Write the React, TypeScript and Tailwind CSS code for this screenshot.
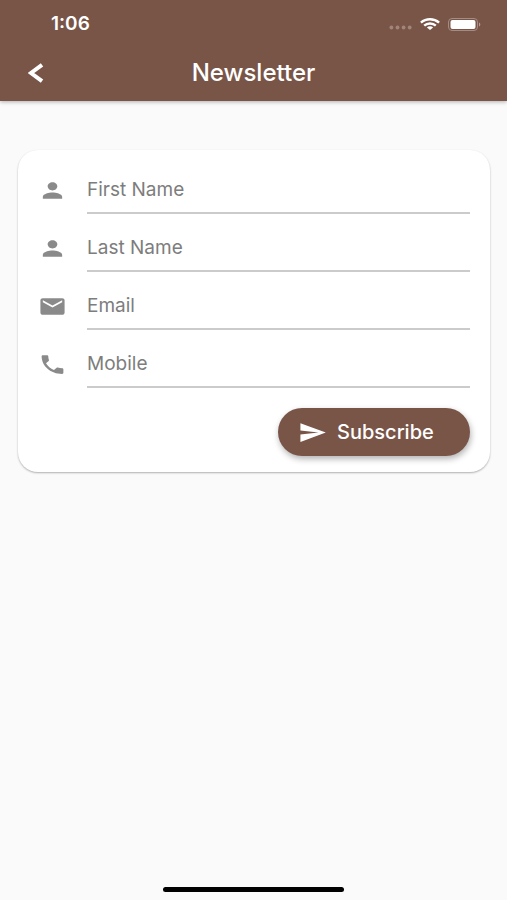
import React, { useState } from 'react';

const PERSON = 'M12 12c2.21 0 4-1.79 4-4s-1.79-4-4-4-4 1.79-4 4 1.79 4 4 4zm0 2c-2.67 0-8 1.34-8 4v2h16v-2c0-2.66-5.33-4-8-4z';
const MAIL = 'M20 4H4c-1.1 0-2 .9-2 2v12c0 1.1.9 2 2 2h16c1.1 0 2-.9 2-2V6c0-1.1-.9-2-2-2zm0 4l-8 5-8-5V6l8 5 8-5v2z';
const PHONE = 'M6.62 10.79c1.44 2.83 3.76 5.14 6.59 6.59l2.2-2.2c.27-.27.67-.36 1.02-.24 1.12.37 2.33.57 3.57.57.55 0 1 .45 1 1V20c0 .55-.45 1-1 1C10.61 21 3 13.39 3 4c0-.55.45-1 1-1h3.5c.55 0 1 .45 1 1 0 1.25.2 2.45.57 3.57.11.35.03.74-.25 1.02l-2.2 2.2z';

const FIELDS = [
  { id: 'firstName', label: 'First Name', type: 'text', icon: PERSON },
  { id: 'lastName', label: 'Last Name', type: 'text', icon: PERSON },
  { id: 'email', label: 'Email', type: 'email', icon: MAIL },
  { id: 'mobile', label: 'Mobile', type: 'tel', icon: PHONE },
];

const StatusBar: React.FC = () => (
  <div className="flex h-12 items-center justify-between pl-[51px] pr-[26px]">
    <span className="text-[19px] font-semibold leading-6">1:06</span>
    <div className="flex items-center gap-2">
      <svg className="h-3 w-[23px]" viewBox="0 0 23 12" fill="#a0857b">
        <circle cx="2.4" cy="9.5" r="1.9" />
        <circle cx="8.5" cy="9.5" r="1.9" />
        <circle cx="14.6" cy="9.5" r="1.9" />
        <circle cx="20.7" cy="9.5" r="1.9" />
      </svg>
      <svg className="h-3 w-5" viewBox="0 0 20 12" fill="none" stroke="currentColor" strokeWidth="2.4">
        <path d="M0.9 4.6C6 0.1 14 0.1 19.1 4.6" />
        <path d="M4.2 7.6C7.3 4.7 12.7 4.7 15.8 7.6" />
        <path d="M6.9 9.5C8.7 7.9 11.3 7.9 13.1 9.5L10 12z" fill="currentColor" stroke="none" />
      </svg>
      <svg className="h-[13px] w-[33px]" viewBox="0 0 33 13" fill="none">
        <rect x="0.5" y="0.5" width="29" height="12" rx="3.5" stroke="#a58c83" />
        <rect x="2.5" y="2" width="25" height="9" rx="2" fill="currentColor" />
        <path d="M31 4.5c1.8.6 1.8 3.4 0 4z" fill="#b39c93" />
      </svg>
    </div>
  </div>
);

const App: React.FC = () => {
  const [values, setValues] = useState<Record<string, string>>({});

  const handleSubmit = (e: React.FormEvent) => {
    e.preventDefault();
    setValues({});
  };

  return (
    <div className="flex min-h-screen flex-col bg-[#fafafa] font-['Inter',sans-serif]">
      <header className="bg-[#795548] text-white shadow-[0_1px_4px_rgba(0,0,0,0.3)]">
        <StatusBar />
        <div className="grid h-[53px] grid-cols-[48px_1fr_48px] items-start px-3">
          <button type="button" aria-label="Back" className="flex h-[50px] items-center justify-center">
            <svg className="h-5 w-4" viewBox="0 0 16 20" fill="none" stroke="currentColor" strokeWidth="4">
              <path d="M14 1.8L3 10l11 8.2" />
            </svg>
          </button>
          <h1 className="text-center text-2xl font-medium leading-[50px]">Newsletter</h1>
        </div>
      </header>

      <main className="pl-[18px] pr-[17px] pt-[49px]">
        <form
          onSubmit={handleSubmit}
          className="flex flex-col gap-5 rounded-[20px] bg-white px-5 py-4 shadow-[0_1px_2px_rgba(0,0,0,0.3)]"
        >
          <div className="flex flex-col gap-[10px]">
            {FIELDS.map(field => (
              <div key={field.id} className="flex items-center gap-5">
                <label htmlFor={field.id} aria-label={field.label}>
                  <svg className="h-[25px] w-[29px]" viewBox="0 0 24 24" preserveAspectRatio="none" fill="#8a8a8a">
                    <path d={field.icon} />
                  </svg>
                </label>
                <input
                  id={field.id}
                  type={field.type}
                  placeholder={field.label}
                  value={values[field.id] || ''}
                  onChange={(e) => setValues({ ...values, [field.id]: e.target.value })}
                  className="h-12 min-w-0 flex-1 border-b-2 border-[#cbcbcb] text-[19px] text-gray-800 outline-none placeholder:text-[#7d7d7d]"
                />
              </div>
            ))}
          </div>
          <button
            type="submit"
            className="flex h-12 w-48 items-center gap-[10px] self-end rounded-full bg-[#795548] pl-5 text-xl font-medium text-white shadow-[1px_3px_6px_rgba(0,0,0,0.3)]"
          >
            <svg className="h-[25px] w-[29px]" viewBox="0 0 24 24" preserveAspectRatio="none" fill="currentColor">
              <path d="M2.01 21L23 12 2.01 3 2 10l15 2-15 2z" />
            </svg>
            Subscribe
          </button>
        </form>
      </main>

      <div className="mt-auto flex justify-center pb-2">
        <div className="h-[5px] w-[181px] rounded-full bg-black"></div>
      </div>
    </div>
  );
};

export default App;
